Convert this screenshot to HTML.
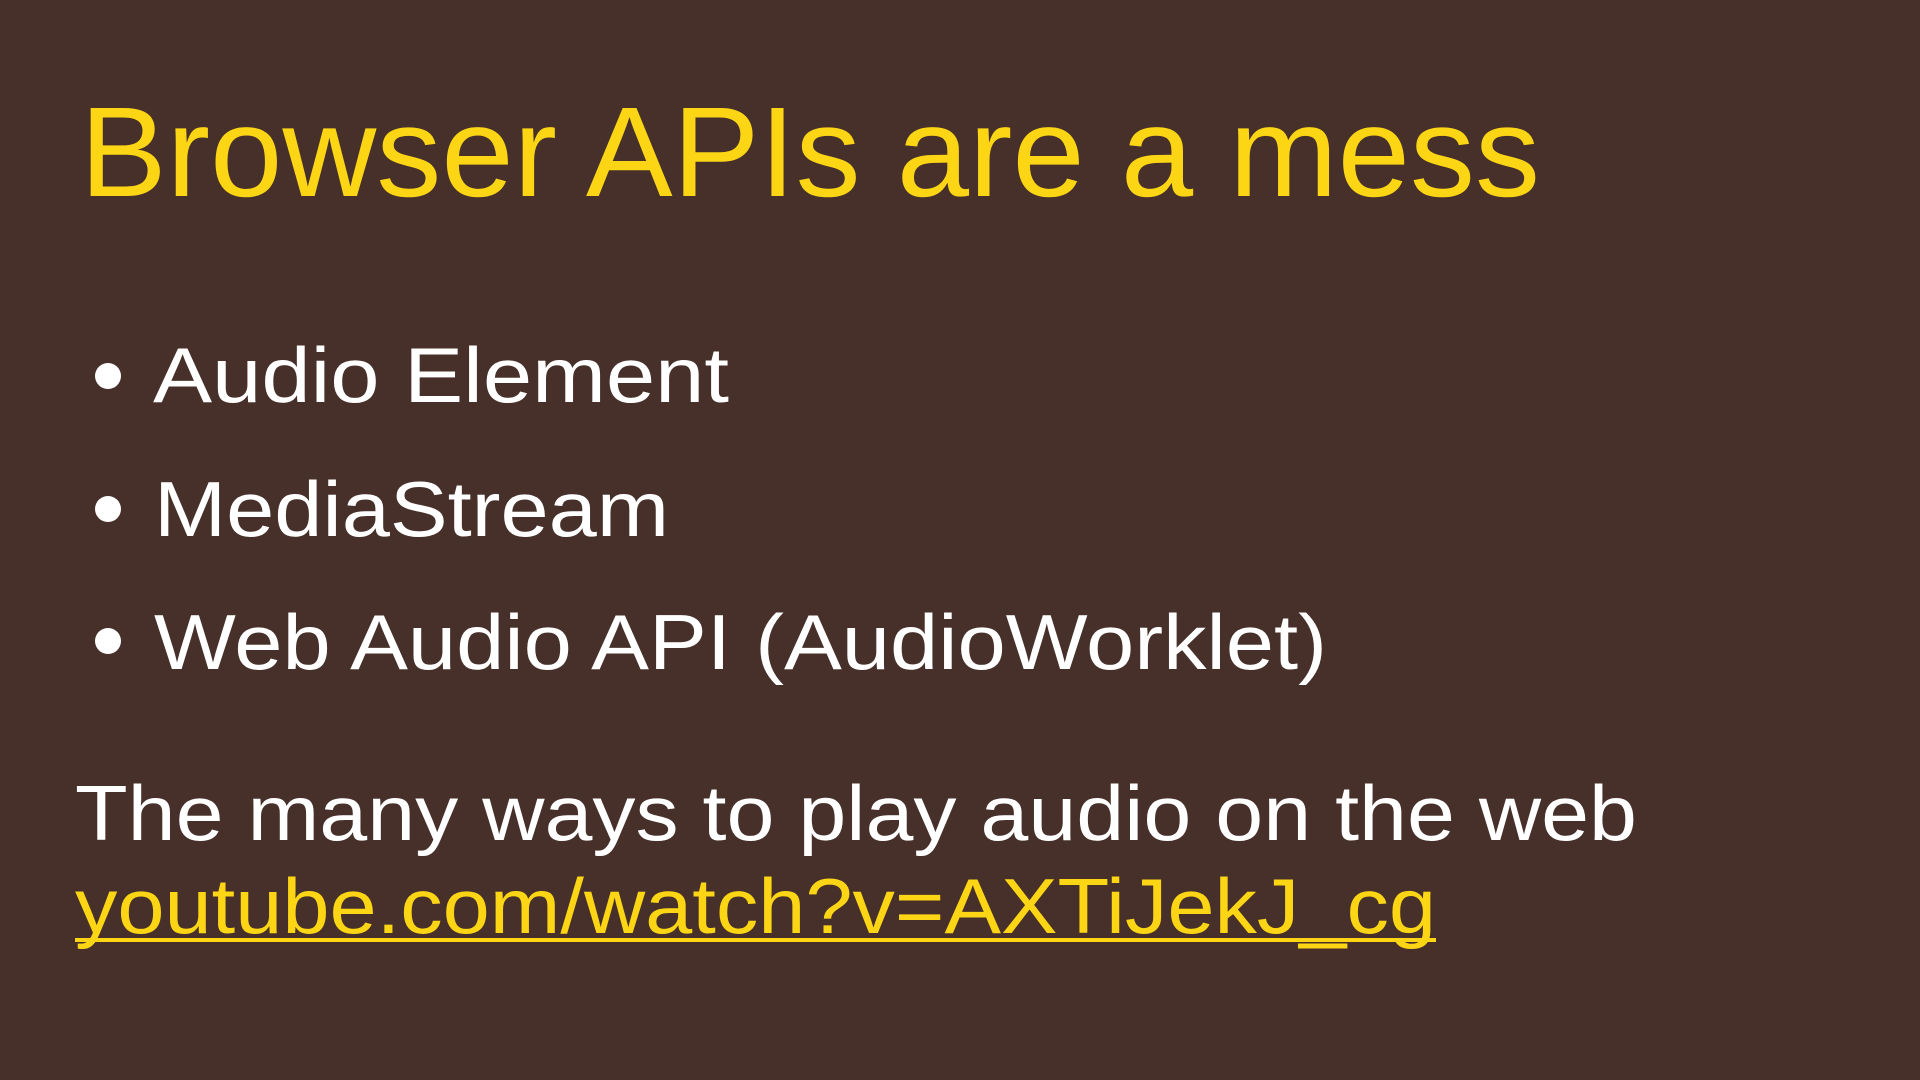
<!DOCTYPE html>
<html><head><meta charset="utf-8"><style>
html,body{margin:0;padding:0;background:#47302a;width:1920px;height:1080px;overflow:hidden}
svg{display:block}
text{font-family:"Liberation Sans",sans-serif}
</style></head><body>
<svg width="1920" height="1080" viewBox="0 0 1920 1080" xmlns="http://www.w3.org/2000/svg">
<rect width="1920" height="1080" fill="#47302a"/>
<text x="80" y="196" font-size="128" fill="#fcd615" textLength="1460" lengthAdjust="spacingAndGlyphs">Browser APIs are a mess</text>
<circle cx="108" cy="376" r="13" fill="#fff"/>
<circle cx="108" cy="509" r="13" fill="#fff"/>
<circle cx="108" cy="641" r="13" fill="#fff"/>
<text x="153" y="402" font-size="78" fill="#fff" textLength="576" lengthAdjust="spacingAndGlyphs">Audio Element</text>
<text x="154" y="536" font-size="78" fill="#fff" textLength="515" lengthAdjust="spacingAndGlyphs">MediaStream</text>
<text x="154" y="669" font-size="78" fill="#fff" textLength="1173" lengthAdjust="spacingAndGlyphs">Web Audio API (AudioWorklet)</text>
<text x="75" y="840" font-size="78" fill="#fff" textLength="1562" lengthAdjust="spacingAndGlyphs">The many ways to play audio on the web</text>
<text x="75" y="933" font-size="78" fill="#fcd615" textLength="1361" lengthAdjust="spacingAndGlyphs">youtube.com/watch?v=AXTiJekJ_cg</text>
<rect x="75" y="938" width="1361" height="4" fill="#fcd615"/>
</svg>
</body></html>
